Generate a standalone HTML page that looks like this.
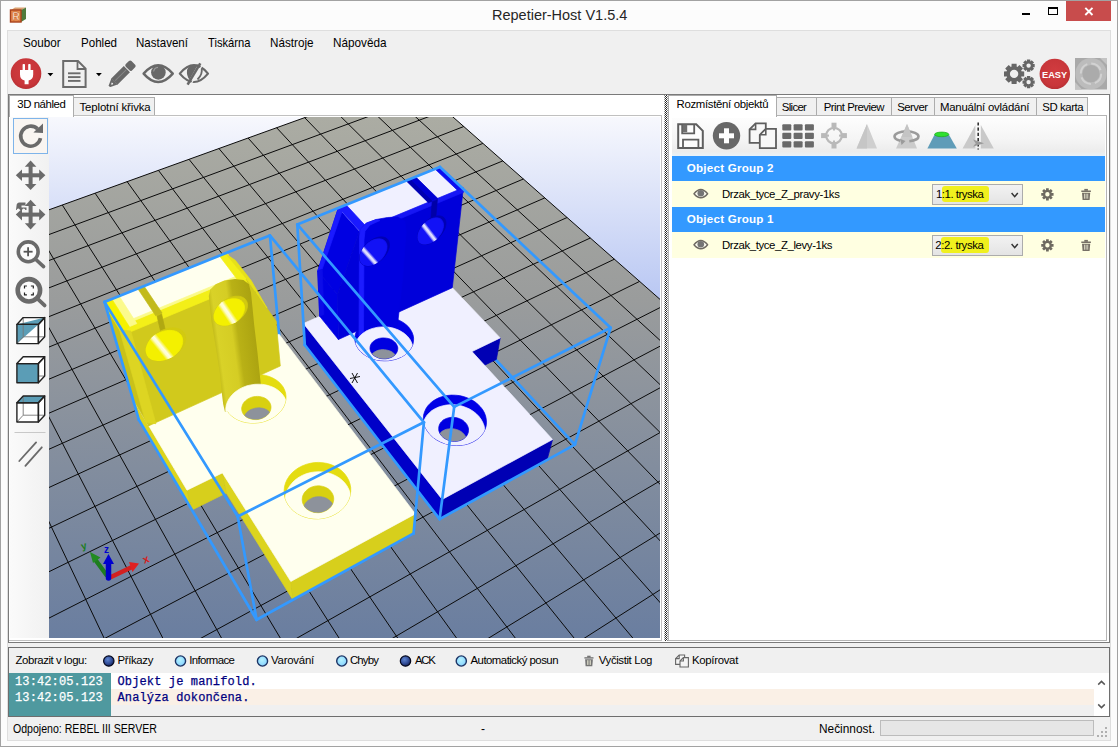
<!DOCTYPE html>
<html lang="cs">
<head>
<meta charset="utf-8">
<title>Repetier-Host V1.5.4</title>
<style>
html,body{margin:0;padding:0;}
body{width:1118px;height:747px;overflow:hidden;background:#fcfcfc;font-family:"Liberation Sans",sans-serif;font-size:12px;color:#000;position:relative;}
.abs{position:absolute;}
#frame{left:0;top:0;width:1116px;height:745px;border:1px solid #a2a2a2;background:#fcfcfc;}
#client{left:7px;top:30px;width:1102px;height:709px;border:1px solid #dedede;background:#f0f0f0;}
#title{left:491px;top:7px;font-size:14.8px;line-height:17px;color:#262626;}
.menu{top:36px;font-size:12.4px;line-height:14px;color:#000;white-space:nowrap;}
.tab{top:97px;height:17px;border:1px solid #acacac;border-bottom:none;background:#f0f0f0;box-sizing:content-box;}
.tab.sel{top:95px;height:21px;background:#fff;z-index:3;}
.t{white-space:nowrap;}
.tt{top:101px;font-size:11.4px;line-height:13px;white-space:nowrap;z-index:4;}
.ht{color:#fff;font-weight:bold;font-size:11.6px;line-height:13px;white-space:nowrap;}
.st{top:722px;font-size:12px;line-height:14px;}
.ms{font-size:11.4px;line-height:13px;white-space:nowrap;}
.hdr{left:672px;width:433px;height:25px;background:#3399ff;}
.row{left:672px;width:433px;height:26px;background:#ffffe1;}
.combo{left:932px;width:89px;height:19px;border:1px solid #acacac;background:linear-gradient(#f2f2f2,#e4e4e4);box-sizing:content-box;}
.hl{background:#f0f01e;border-radius:3px;}
.log{font-family:"Liberation Mono",monospace;font-size:12px;white-space:pre;line-height:16px;-webkit-text-stroke:0.25px currentColor;}
</style>
<style>
#title{left:491.7px !important;transform-origin:0 50%;transform:scaleX(0.9792);}
#m1{left:23.0px !important;transform-origin:0 50%;transform:scaleX(0.9432);}
#m2{left:80.5px !important;transform-origin:0 50%;transform:scaleX(0.9328);}
#m3{left:136.0px !important;transform-origin:0 50%;transform:scaleX(0.9320);}
#m4{left:207.5px !important;transform-origin:0 50%;transform:scaleX(0.9031);}
#m5{left:270.0px !important;transform-origin:0 50%;transform:scaleX(0.9428);}
#m6{left:332.5px !important;transform-origin:0 50%;transform:scaleX(0.9469);}
#t1{left:17.3px !important;letter-spacing:-0.438px;}
#t2{left:79.5px !important;letter-spacing:-0.121px;}
#t3{left:676.6px !important;letter-spacing:-0.328px;}
#t4{left:781.8px !important;letter-spacing:-0.681px;}
#t5{left:823.7px !important;letter-spacing:-0.524px;}
#t6{left:897.2px !important;letter-spacing:-0.552px;}
#t7{left:940.0px !important;letter-spacing:-0.226px;}
#t8{left:1042.2px !important;letter-spacing:-0.402px;}
#h1{left:686.8px !important;letter-spacing:0.232px;}
#h2{left:686.8px !important;letter-spacing:0.232px;}
#r1{left:721.9px !important;letter-spacing:-0.381px;}
#r2{left:721.9px !important;letter-spacing:-0.389px;}
#c1{left:936.0px !important;letter-spacing:-0.468px;}
#c2{left:935.2px !important;letter-spacing:-0.386px;}
#l0{left:15.5px !important;letter-spacing:-0.414px;}
#l1{left:117.5px !important;letter-spacing:-0.355px;}
#l2{left:189.2px !important;letter-spacing:-0.628px;}
#l3{left:271.0px !important;letter-spacing:-0.219px;}
#l4{left:350.0px !important;letter-spacing:-0.859px;}
#l5{left:415.0px !important;letter-spacing:-1.307px;}
#l6{left:470.5px !important;letter-spacing:-0.515px;}
#l7{left:598.8px !important;letter-spacing:-0.382px;}
#l8{left:692.0px !important;letter-spacing:-0.307px;}
#s1{left:13.0px !important;transform-origin:0 50%;transform:scaleX(0.8812);}
#s3{left:818.5px !important;transform-origin:0 50%;transform:scaleX(0.9876);}
#g1{left:15.0px !important;letter-spacing:0.123px;}
#g2{left:117.5px !important;letter-spacing:0.130px;}
</style>
</head>
<body>
<div id="frame" class="abs"></div>
<div id="client" class="abs"></div>
<div id="title" class="abs t">Repetier-Host V1.5.4</div>

<svg class="abs" style="left:8px;top:6px" width="20" height="20" viewBox="0 0 20 20">
 <polygon points="3,4 7,1.5 18,1.5 13,4" fill="#d9a070"/>
 <polygon points="13,4 18,1.5 18,13 13,16" fill="#4f7a3c"/>
 <rect x="2.5" y="4" width="10.5" height="12" fill="#e58a4e" stroke="#a8401a" stroke-width="1.4"/>
 <text x="4.2" y="14" font-family="Liberation Sans,sans-serif" font-weight="bold" font-size="10.5" fill="#ffe6cc" stroke="#b5501c" stroke-width="0.35">R</text>
</svg>
<div class="abs" style="left:1022px;top:13px;width:8px;height:2px;background:#000;"></div>
<div class="abs" style="left:1048px;top:7px;width:8px;height:5px;border:1px solid #000;border-top-width:2px;"></div>
<div class="abs" style="left:1066px;top:1px;width:45px;height:20px;background:#c84c4c;"></div>
<svg class="abs" style="left:1066px;top:1px" width="45" height="20"><g stroke="#fff" stroke-width="1.9"><line x1="19.3" y1="6.8" x2="26.5" y2="14"/><line x1="26.5" y1="6.8" x2="19.3" y2="14"/></g></svg>


<!-- menu -->
<div id="m1" class="abs menu" style="left:23px">Soubor</div>
<div id="m2" class="abs menu" style="left:80px">Pohled</div>
<div id="m3" class="abs menu" style="left:136px">Nastavení</div>
<div id="m4" class="abs menu" style="left:207px">Tiskárna</div>
<div id="m5" class="abs menu" style="left:270px">Nástroje</div>
<div id="m6" class="abs menu" style="left:333px">Nápověda</div>
<svg class="abs" style="left:8px;top:56px" width="1102" height="37" viewBox="8 56 1102 37">
<defs><radialGradient id="rg" cx="0.5" cy="0.45" r="0.55"><stop offset="0" stop-color="#d23c40"/><stop offset="0.8" stop-color="#c8363a"/><stop offset="1" stop-color="#b83034"/></radialGradient></defs>
<circle cx="26" cy="73.6" r="15.3" fill="url(#rg)"/>
<g fill="#fff"><rect x="22.6" y="64" width="2.4" height="7" rx="0.8"/><rect x="28.2" y="64" width="2.4" height="7" rx="0.8"/><path d="M20,70 H33.2 V74.5 Q33.2,79.5 28.6,80.6 V84.2 H24.6 V80.6 Q20,79.5 20,74.5Z"/></g>
<polygon points="47.5,73 53.3,73 50.4,76.2" fill="#000"/>
<g fill="none" stroke="#6b6b6b" stroke-width="2"><path d="M63.2,61 H78 L85.6,68.6 V87 H63.2Z" stroke-linejoin="miter"/><path d="M77.5,61 V69 H85.6" stroke-width="1.8"/></g>
<g stroke="#6b6b6b" stroke-width="1.9"><line x1="68" y1="73.3" x2="80.5" y2="73.3"/><line x1="68" y1="77.1" x2="80.5" y2="77.1"/><line x1="68" y1="80.9" x2="80.5" y2="80.9"/></g>
<polygon points="96,73 101.8,73 98.9,76.2" fill="#000"/>
<g transform="translate(109.2,86.6) rotate(-44.5)" fill="#686868"><polygon points="0,0 0.6,-1.2 7.4,-4.4 7.4,4.4 0.6,1.2"/><rect x="7.2" y="-4.4" width="17.6" height="8.8"/><rect x="25.8" y="-4.4" width="8" height="8.8" rx="1.8"/><polygon points="2.8,-0.2 4.6,-1.2 5.2,0.4 3.6,1" fill="#f0f0f0"/><rect x="8.5" y="-0.5" width="15.6" height="0.9" fill="#868686"/></g>
<g><path d="M143.6,73.6 Q158.2,56.8 172.8,73.6 Q158.2,90.4 143.6,73.6Z" fill="none" stroke="#686868" stroke-width="2.4" stroke-linejoin="round"/><circle cx="158.4" cy="72.4" r="7.3" fill="#686868"/><path d="M153.6,71.5 A5,5 0 0 1 158,67.4" fill="none" stroke="#9a9a9a" stroke-width="1.1"/></g>
<g><path d="M179.8,73.6 Q194,56.8 208,73.6 Q194,90.4 179.8,73.6Z" fill="none" stroke="#686868" stroke-width="2.2" stroke-linejoin="round"/><path d="M187,70 Q188,65 198,64.6 L189.5,79.6 Q186.4,76 187,70Z" fill="#686868"/><path d="M201.5,68 Q203,74 197.5,79.5" fill="none" stroke="#686868" stroke-width="1.8"/><line x1="187.6" y1="84.6" x2="200.3" y2="63.3" stroke="#686868" stroke-width="2.6"/><line x1="190.3" y1="85.2" x2="202.6" y2="64.6" stroke="#f0f0f0" stroke-width="1.2"/></g>
<path d="M1021.33,71.25 L1024.20,71.41 L1024.20,76.39 L1021.33,76.55 L1021.09,77.13 L1023.00,79.28 L1019.48,82.80 L1017.33,80.89 L1016.75,81.13 L1016.59,84.00 L1011.61,84.00 L1011.45,81.13 L1010.87,80.89 L1008.72,82.80 L1005.20,79.28 L1007.11,77.13 L1006.87,76.55 L1004.00,76.39 L1004.00,71.41 L1006.87,71.25 L1007.11,70.67 L1005.20,68.52 L1008.72,65.00 L1010.87,66.91 L1011.45,66.67 L1011.61,63.80 L1016.59,63.80 L1016.75,66.67 L1017.33,66.91 L1019.48,65.00 L1023.00,68.52 L1021.09,70.67Z M1009.90,73.90 a4.20,4.20 0 1,0 8.40,0 a4.20,4.20 0 1,0 -8.40,0Z" fill="#666" fill-rule="evenodd"/>
<path d="M1032.76,63.89 L1034.68,63.93 L1034.68,67.27 L1032.76,67.31 L1032.75,67.34 L1034.07,68.72 L1031.72,71.07 L1030.34,69.75 L1030.31,69.76 L1030.27,71.68 L1026.93,71.68 L1026.89,69.76 L1026.86,69.75 L1025.48,71.07 L1023.13,68.72 L1024.45,67.34 L1024.44,67.31 L1022.52,67.27 L1022.52,63.93 L1024.44,63.89 L1024.45,63.86 L1023.13,62.48 L1025.48,60.13 L1026.86,61.45 L1026.89,61.44 L1026.93,59.52 L1030.27,59.52 L1030.31,61.44 L1030.34,61.45 L1031.72,60.13 L1034.07,62.48 L1032.75,63.86Z M1026.40,65.60 a2.20,2.20 0 1,0 4.40,0 a2.20,2.20 0 1,0 -4.40,0Z" fill="#666" fill-rule="evenodd"/>
<path d="M1032.76,80.39 L1034.68,80.43 L1034.68,83.77 L1032.76,83.81 L1032.75,83.84 L1034.07,85.22 L1031.72,87.57 L1030.34,86.25 L1030.31,86.26 L1030.27,88.18 L1026.93,88.18 L1026.89,86.26 L1026.86,86.25 L1025.48,87.57 L1023.13,85.22 L1024.45,83.84 L1024.44,83.81 L1022.52,83.77 L1022.52,80.43 L1024.44,80.39 L1024.45,80.36 L1023.13,78.98 L1025.48,76.63 L1026.86,77.95 L1026.89,77.94 L1026.93,76.02 L1030.27,76.02 L1030.31,77.94 L1030.34,77.95 L1031.72,76.63 L1034.07,78.98 L1032.75,80.36Z M1026.40,82.10 a2.20,2.20 0 1,0 4.40,0 a2.20,2.20 0 1,0 -4.40,0Z" fill="#666" fill-rule="evenodd"/>
<circle cx="1054.8" cy="73.9" r="15.2" fill="url(#rg)"/>
<text x="1054.6" y="77.5" text-anchor="middle" font-family="Liberation Sans,sans-serif" font-weight="bold" font-size="9.3" fill="#fff" textLength="25.2" lengthAdjust="spacingAndGlyphs">EASY</text>
<rect x="1075" y="58" width="32" height="31.5" fill="#a9a9a9"/><circle cx="1091" cy="73.7" r="15.6" fill="#bcbcbc"/><circle cx="1091" cy="73.7" r="10.2" fill="none" stroke="#d2d2d2" stroke-width="2" stroke-dasharray="12 4"/><circle cx="1091" cy="73.7" r="8.6" fill="#ababab"/><polygon points="1075,89.5 1082,89.5 1075,82" fill="#c4c4c4"/><polygon points="1107,58 1100,58 1107,65" fill="#c4c4c4"/>
</svg>

<!-- split container top line -->
<div class="abs" style="left:8px;top:94px;width:1102px;height:549px;background:#fff;border:1px solid #7a7a7a;box-sizing:border-box;"></div>

<!-- left tab control -->
<div class="abs tab sel" style="left:9px;width:63px;"></div><div id="t1" class="abs tt" style="top:98px;">3D náhled</div>
<div class="abs tab" style="left:73px;width:80px;"></div><div id="t2" class="abs tt">Teplotní křivka</div>
<div class="abs" style="left:9px;top:115px;width:653px;height:526px;border:1px solid #c0c0c0;border-left:none;box-sizing:border-box;background:#fff;"></div>
<div class="abs" style="left:10px;top:116px;width:39px;height:522px;background:linear-gradient(90deg,#fafafa,#f1f1f1);"></div>
<div class="abs" style="left:13px;top:118px;width:33px;height:34px;border:1px solid #7eb4ea;background:#f9f5f1;"></div>
<svg class="abs" style="left:10px;top:116px" width="39" height="360" viewBox="10 116 39 360">
<path d="M37.6,128.9 A10,10 0 1 0 40.5,138.2" fill="none" stroke="#6a6a6a" stroke-width="3.6"/>
<polygon points="33.4,132.6 43,133 43,123.6" fill="#6a6a6a"/>
<g fill="#6a6a6a" stroke="none"><rect x="19.6" y="173.3" width="22" height="4"/><rect x="28.6" y="164.3" width="4" height="22"/><polygon points="45.4,175.3 39.2,181.1 39.2,169.5"/><polygon points="15.8,175.3 22.0,169.5 22.0,181.1"/><polygon points="30.6,190.1 24.8,183.9 36.4,183.9"/><polygon points="30.6,160.5 36.4,166.7 24.8,166.7"/></g>
<g fill="#6a6a6a" stroke="none"><rect x="19.6" y="212.6" width="22" height="4"/><rect x="28.6" y="203.6" width="4" height="22"/><polygon points="45.4,214.6 39.2,220.4 39.2,208.8"/><polygon points="15.8,214.6 22.0,208.8 22.0,220.4"/><polygon points="30.6,229.4 24.8,223.2 36.4,223.2"/><polygon points="30.6,199.8 36.4,206.0 24.8,206.0"/></g>
<path d="M16.5,206 q0,-3.5 3,-3.5 h6 v3 h-4 v2 h5 v2.5 h-1.2 a1.6,1.6 0 0 0 -3.2,0 h-2.2 a1.6,1.6 0 0 0 -3.2,0 h-0.7z" fill="#6a6a6a"/>
<circle cx="28.2" cy="251.8" r="9.9" fill="#fbfbfb" stroke="#6a6a6a" stroke-width="3.6"/>
<g stroke="#555" stroke-width="1.8"><line x1="23.6" y1="251.7" x2="32.6" y2="251.7"/><line x1="28.1" y1="247.2" x2="28.1" y2="256.2"/></g>
<line x1="35.6" y1="259.2" x2="43.6" y2="266.6" stroke="#6a6a6a" stroke-width="3.6" stroke-linecap="round"/>
<circle cx="28.9" cy="290.3" r="11.2" fill="#fbfbfb" stroke="#6a6a6a" stroke-width="4.6"/>
<g fill="none" stroke="#222" stroke-width="1.2"><polyline points="24.5,288.4 24.5,286 26.9,286"/><polyline points="30.9,286 33.3,286 33.3,288.4"/><polyline points="33.3,292.4 33.3,294.8 30.9,294.8"/><polyline points="26.9,294.8 24.5,294.8 24.5,292.4"/></g>
<line x1="38.2" y1="299.4" x2="44.6" y2="305.4" stroke="#6a6a6a" stroke-width="3.8" stroke-linecap="round"/>
<polygon points="16.9,324.4 23.2,317.6 44.7,317.6 38.4,324.4" fill="#fff"/><polygon points="16.9,324.4 44.7,317.6 38.4,324.4" fill="#5b9db6"/><polygon points="38.4,324.4 44.7,317.6 44.7,336.8 38.4,343.6" fill="#fff"/><polygon points="16.9,324.4 38.4,324.4 38.4,343.6 16.9,343.6" fill="#fff"/><polygon points="16.9,324.4 38.4,324.4 16.9,343.6" fill="#5b9db6"/><g fill="none" stroke="#777" stroke-width="0.9"><polyline points="23.2,317.6 23.2,336.8 44.7,336.8"/><line x1="23.2" y1="336.8" x2="16.9" y2="343.6"/></g><g fill="none" stroke="#222" stroke-width="1.4" stroke-linejoin="round"><polygon points="16.9,324.4 38.4,324.4 38.4,343.6 16.9,343.6"/><polygon points="16.9,324.4 23.2,317.6 44.7,317.6 38.4,324.4"/><polygon points="38.4,324.4 44.7,317.6 44.7,336.8 38.4,343.6"/></g>
<polygon points="16.9,363.6 23.2,356.8 44.7,356.8 38.4,363.6" fill="#fff"/><polygon points="38.4,363.6 44.7,356.8 44.7,376.0 38.4,382.8" fill="#fff"/><polygon points="16.9,363.6 38.4,363.6 38.4,382.8 16.9,382.8" fill="#5b9db6"/><line x1="38.4" y1="376.0" x2="44.7" y2="376.0" stroke="#777" stroke-width="0.9"/><g fill="none" stroke="#222" stroke-width="1.4" stroke-linejoin="round"><polygon points="16.9,363.6 38.4,363.6 38.4,382.8 16.9,382.8"/><polygon points="16.9,363.6 23.2,356.8 44.7,356.8 38.4,363.6"/><polygon points="38.4,363.6 44.7,356.8 44.7,376.0 38.4,382.8"/></g>
<polygon points="16.9,402.8 23.2,396.0 44.7,396.0 38.4,402.8" fill="#5b9db6"/><polygon points="38.4,402.8 44.7,396.0 44.7,415.2 38.4,422.0" fill="#fff"/><polygon points="16.9,402.8 38.4,402.8 38.4,422.0 16.9,422.0" fill="#fff"/><g fill="none" stroke="#777" stroke-width="0.9"><polyline points="23.2,396.0 23.2,415.2 44.7,415.2"/><line x1="23.2" y1="415.2" x2="16.9" y2="422.0"/></g><g fill="none" stroke="#222" stroke-width="1.4" stroke-linejoin="round"><polygon points="16.9,402.8 38.4,402.8 38.4,422.0 16.9,422.0"/><polygon points="16.9,402.8 23.2,396.0 44.7,396.0 38.4,402.8"/><polygon points="38.4,402.8 44.7,396.0 44.7,415.2 38.4,422.0"/></g>
<line x1="14.5" y1="432.5" x2="45.5" y2="432.5" stroke="#c8c8c8" stroke-width="1"/>
<g stroke="#6a6a6a" stroke-width="1.8" stroke-linecap="round"><line x1="19.3" y1="461" x2="36.1" y2="442.4"/><line x1="25.4" y1="465.8" x2="41.8" y2="447.3"/></g>
</svg>
<svg class="abs" style="left:49px;top:117px" width="611" height="521" viewBox="49 117 611 521">
<defs><linearGradient id="bg" x1="0" y1="0" x2="0" y2="1"><stop offset="0" stop-color="#f7f8fd"/><stop offset="1" stop-color="#456ce0"/></linearGradient><linearGradient id="fl" gradientUnits="userSpaceOnUse" x1="0" y1="117" x2="0" y2="638"><stop offset="0" stop-color="#abaca3"/><stop offset="0.35" stop-color="#9a9c9c"/><stop offset="1" stop-color="#6a7ea0"/></linearGradient></defs>
<rect x="49" y="117" width="611" height="521" fill="url(#bg)"/>
<polygon points="410.4,79.5 -231.7,311.0 30.2,1159.8 925.8,533.5" fill="url(#fl)" />
<line x1="410.4" y1="79.5" x2="925.8" y2="533.5" stroke="#0a0a0a" stroke-width="1" />
<line x1="410.4" y1="79.5" x2="-231.7" y2="311.0" stroke="#0a0a0a" stroke-width="1" />
<line x1="384.8" y1="88.7" x2="894.9" y2="555.1" stroke="#0a0a0a" stroke-width="1" />
<line x1="427.6" y1="94.6" x2="-224.2" y2="335.5" stroke="#0a0a0a" stroke-width="1" />
<line x1="358.6" y1="98.1" x2="863.0" y2="577.5" stroke="#0a0a0a" stroke-width="1" />
<line x1="445.4" y1="110.3" x2="-216.3" y2="361.0" stroke="#0a0a0a" stroke-width="1" />
<line x1="331.9" y1="107.8" x2="830.0" y2="600.5" stroke="#0a0a0a" stroke-width="1" />
<line x1="463.8" y1="126.5" x2="-208.0" y2="387.8" stroke="#0a0a0a" stroke-width="1" />
<line x1="304.6" y1="117.6" x2="795.9" y2="624.4" stroke="#0a0a0a" stroke-width="1" />
<line x1="482.9" y1="143.4" x2="-199.4" y2="415.8" stroke="#0a0a0a" stroke-width="1" />
<line x1="276.6" y1="127.7" x2="760.6" y2="649.1" stroke="#0a0a0a" stroke-width="1" />
<line x1="502.8" y1="160.9" x2="-190.3" y2="445.2" stroke="#0a0a0a" stroke-width="1" />
<line x1="248.1" y1="138.0" x2="724.0" y2="674.6" stroke="#0a0a0a" stroke-width="1" />
<line x1="523.4" y1="179.0" x2="-180.8" y2="476.1" stroke="#0a0a0a" stroke-width="1" />
<line x1="218.9" y1="148.5" x2="686.2" y2="701.1" stroke="#0a0a0a" stroke-width="1" />
<line x1="544.8" y1="197.9" x2="-170.8" y2="508.6" stroke="#0a0a0a" stroke-width="1" />
<line x1="189.0" y1="159.3" x2="646.9" y2="728.6" stroke="#0a0a0a" stroke-width="1" />
<line x1="567.1" y1="217.5" x2="-160.2" y2="542.8" stroke="#0a0a0a" stroke-width="1" />
<line x1="158.4" y1="170.3" x2="606.1" y2="757.1" stroke="#0a0a0a" stroke-width="1" />
<line x1="590.3" y1="238.0" x2="-149.1" y2="578.8" stroke="#0a0a0a" stroke-width="1" />
<line x1="127.1" y1="181.6" x2="563.8" y2="786.7" stroke="#0a0a0a" stroke-width="1" />
<line x1="614.4" y1="259.2" x2="-137.3" y2="616.9" stroke="#0a0a0a" stroke-width="1" />
<line x1="95.1" y1="193.2" x2="519.8" y2="817.5" stroke="#0a0a0a" stroke-width="1" />
<line x1="639.6" y1="281.4" x2="-124.9" y2="657.2" stroke="#0a0a0a" stroke-width="1" />
<line x1="62.3" y1="205.0" x2="474.1" y2="849.4" stroke="#0a0a0a" stroke-width="1" />
<line x1="665.9" y1="304.6" x2="-111.8" y2="699.8" stroke="#0a0a0a" stroke-width="1" />
<line x1="28.7" y1="217.1" x2="426.5" y2="882.7" stroke="#0a0a0a" stroke-width="1" />
<line x1="693.3" y1="328.7" x2="-97.8" y2="745.0" stroke="#0a0a0a" stroke-width="1" />
<line x1="-5.8" y1="229.5" x2="376.9" y2="917.4" stroke="#0a0a0a" stroke-width="1" />
<line x1="722.0" y1="354.0" x2="-83.0" y2="793.1" stroke="#0a0a0a" stroke-width="1" />
<line x1="-41.1" y1="242.3" x2="325.3" y2="953.5" stroke="#0a0a0a" stroke-width="1" />
<line x1="752.0" y1="380.5" x2="-67.2" y2="844.3" stroke="#0a0a0a" stroke-width="1" />
<line x1="-77.3" y1="255.3" x2="271.4" y2="991.2" stroke="#0a0a0a" stroke-width="1" />
<line x1="783.5" y1="408.2" x2="-50.3" y2="898.9" stroke="#0a0a0a" stroke-width="1" />
<line x1="-114.4" y1="268.7" x2="215.1" y2="1030.6" stroke="#0a0a0a" stroke-width="1" />
<line x1="816.4" y1="437.2" x2="-32.3" y2="957.4" stroke="#0a0a0a" stroke-width="1" />
<line x1="-152.5" y1="282.5" x2="156.2" y2="1071.7" stroke="#0a0a0a" stroke-width="1" />
<line x1="851.1" y1="467.7" x2="-12.9" y2="1020.0" stroke="#0a0a0a" stroke-width="1" />
<line x1="-191.6" y1="296.6" x2="94.7" y2="1114.7" stroke="#0a0a0a" stroke-width="1" />
<line x1="887.5" y1="499.8" x2="7.8" y2="1087.3" stroke="#0a0a0a" stroke-width="1" />
<line x1="-231.7" y1="311.0" x2="30.2" y2="1159.8" stroke="#0a0a0a" stroke-width="1" />
<line x1="925.8" y1="533.5" x2="30.2" y2="1159.8" stroke="#0a0a0a" stroke-width="1" />
<line x1="429.6" y1="288.7" x2="304.8" y2="345.0" stroke="#3399ff" stroke-width="2.7" stroke-linecap="round"/>
<line x1="429.6" y1="288.7" x2="439.9" y2="167.0" stroke="#3399ff" stroke-width="2.7" stroke-linecap="round"/>
<line x1="574.9" y1="444.6" x2="429.6" y2="288.7" stroke="#3399ff" stroke-width="2.7" stroke-linecap="round"/>
<polygon points="304.8,345.0 439.6,519.1 442.2,499.4 303.4,323.5" fill="#0000c8" stroke="#0000c8" stroke-width="0.7" stroke-linejoin="round" />
<polygon points="468.9,373.0 496.4,359.4 500.2,337.9 472.0,351.6" fill="#0000b4" stroke="#0000b4" stroke-width="0.7" stroke-linejoin="round" />
<polygon points="439.6,519.1 547.0,460.0 552.6,439.5 442.2,499.4" fill="#0000b4" stroke="#0000b4" stroke-width="0.7" stroke-linejoin="round" />
<polygon points="303.4,323.5 432.1,266.5 500.2,337.9 472.0,351.6 552.6,439.5 442.2,499.4" fill="#f0f0ff" stroke="#f0f0ff" stroke-width="0.7" stroke-linejoin="round" />
<polygon points="480.3,406.7 482.6,409.6 484.4,412.8 485.6,416.0 486.3,419.4 486.5,422.7 486.1,426.1 485.1,429.3 483.6,432.4 481.5,435.3 479.0,437.9 476.0,440.1 472.6,442.1 468.9,443.6 464.9,444.7 460.7,445.3 456.4,445.5 452.1,445.2 447.9,444.4 443.8,443.2 439.8,441.6 436.2,439.6 432.9,437.2 430.1,434.5 427.7,431.6 425.8,428.4 424.4,425.2 423.6,421.8 423.3,418.5 423.6,415.1 424.5,411.9 425.9,408.8 427.7,406.0 430.1,403.4 432.9,401.1 436.1,399.1 439.5,397.5 443.3,396.3 447.2,395.5 451.3,395.1 455.4,395.2 459.5,395.6 463.6,396.6 467.5,397.9 471.2,399.6 474.6,401.6 477.6,404.0 480.3,406.7" fill="#0000e6" stroke="#0000e6" stroke-width="0.7" stroke-linejoin="round" />
<clipPath id="c1a"><polygon points="480.3,406.7 482.6,409.6 484.4,412.8 485.6,416.0 486.3,419.4 486.5,422.7 486.1,426.1 485.1,429.3 483.6,432.4 481.5,435.3 479.0,437.9 476.0,440.1 472.6,442.1 468.9,443.6 464.9,444.7 460.7,445.3 456.4,445.5 452.1,445.2 447.9,444.4 443.8,443.2 439.8,441.6 436.2,439.6 432.9,437.2 430.1,434.5 427.7,431.6 425.8,428.4 424.4,425.2 423.6,421.8 423.3,418.5 423.6,415.1 424.5,411.9 425.9,408.8 427.7,406.0 430.1,403.4 432.9,401.1 436.1,399.1 439.5,397.5 443.3,396.3 447.2,395.5 451.3,395.1 455.4,395.2 459.5,395.6 463.6,396.6 467.5,397.9 471.2,399.6 474.6,401.6 477.6,404.0 480.3,406.7"/></clipPath>
<polygon points="478.8,416.3 481.0,419.2 482.7,422.3 484.0,425.5 484.7,428.8 484.8,432.2 484.4,435.5 483.4,438.7 481.9,441.8 479.9,444.6 477.4,447.2 474.4,449.5 471.1,451.4 467.4,452.9 463.5,454.0 459.4,454.6 455.1,454.8 450.9,454.5 446.7,453.8 442.6,452.6 438.8,450.9 435.2,448.9 431.9,446.6 429.1,443.9 426.8,441.0 424.9,437.9 423.5,434.6 422.7,431.3 422.5,427.9 422.8,424.6 423.6,421.4 425.0,418.4 426.8,415.5 429.2,412.9 431.9,410.6 435.0,408.7 438.5,407.1 442.2,405.9 446.1,405.1 450.1,404.7 454.2,404.7 458.2,405.2 462.2,406.1 466.1,407.5 469.7,409.1 473.1,411.2 476.1,413.6 478.8,416.3" fill="#f0f0ff" stroke="#f0f0ff" stroke-width="0.7" stroke-linejoin="round" clip-path="url(#c1a)"/>
<clipPath id="c1b"><polygon points="465.7,423.0 466.8,424.4 467.6,425.9 468.2,427.4 468.5,429.0 468.5,430.6 468.3,432.2 467.8,433.8 467.1,435.2 466.1,436.6 464.9,437.8 463.5,438.9 461.9,439.8 460.1,440.5 458.3,441.0 456.3,441.3 454.3,441.3 452.3,441.2 450.3,440.9 448.4,440.3 446.6,439.5 444.8,438.6 443.3,437.5 441.9,436.2 440.8,434.8 439.9,433.4 439.2,431.8 438.8,430.2 438.7,428.6 438.8,427.0 439.2,425.5 439.8,424.0 440.7,422.6 441.8,421.4 443.1,420.2 444.6,419.3 446.3,418.5 448.1,417.9 450.0,417.5 451.9,417.3 453.9,417.4 455.8,417.6 457.8,418.1 459.6,418.7 461.4,419.5 463.0,420.5 464.4,421.7 465.7,423.0"/></clipPath>
<polygon points="465.7,423.0 466.8,424.4 467.6,425.9 468.2,427.4 468.5,429.0 468.5,430.6 468.3,432.2 467.8,433.8 467.1,435.2 466.1,436.6 464.9,437.8 463.5,438.9 461.9,439.8 460.1,440.5 458.3,441.0 456.3,441.3 454.3,441.3 452.3,441.2 450.3,440.9 448.4,440.3 446.6,439.5 444.8,438.6 443.3,437.5 441.9,436.2 440.8,434.8 439.9,433.4 439.2,431.8 438.8,430.2 438.7,428.6 438.8,427.0 439.2,425.5 439.8,424.0 440.7,422.6 441.8,421.4 443.1,420.2 444.6,419.3 446.3,418.5 448.1,417.9 450.0,417.5 451.9,417.3 453.9,417.4 455.8,417.6 457.8,418.1 459.6,418.7 461.4,419.5 463.0,420.5 464.4,421.7 465.7,423.0" fill="#0000e0" stroke="#0000e0" stroke-width="0.7" stroke-linejoin="round" />
<polygon points="464.0,434.3 465.1,435.7 465.9,437.2 466.4,438.7 466.7,440.3 466.8,441.9 466.6,443.5 466.1,445.0 465.4,446.4 464.4,447.8 463.2,449.0 461.8,450.0 460.2,450.9 458.5,451.6 456.7,452.1 454.8,452.4 452.8,452.5 450.8,452.4 448.9,452.0 447.0,451.5 445.1,450.7 443.5,449.8 442.0,448.7 440.6,447.4 439.5,446.0 438.6,444.6 437.9,443.0 437.5,441.5 437.4,439.9 437.5,438.3 437.9,436.7 438.5,435.3 439.4,433.9 440.5,432.7 441.8,431.6 443.3,430.6 444.9,429.8 446.7,429.2 448.5,428.9 450.4,428.7 452.4,428.7 454.3,428.9 456.2,429.4 458.0,430.0 459.8,430.8 461.4,431.8 462.8,433.0 464.0,434.3" fill="#8d929b" stroke="#8d929b" stroke-width="0.7" stroke-linejoin="round" clip-path="url(#c1b)"/>
<polygon points="408.7,327.1 410.6,329.7 412.1,332.4 413.1,335.2 413.6,338.1 413.5,341.1 413.0,344.0 411.9,346.8 410.3,349.4 408.2,351.9 405.7,354.2 402.8,356.2 399.5,357.8 396.0,359.2 392.2,360.1 388.3,360.7 384.3,360.8 380.3,360.6 376.4,359.9 372.6,358.8 369.1,357.4 365.8,355.7 362.9,353.6 360.3,351.3 358.3,348.7 356.6,346.0 355.5,343.2 354.9,340.3 354.9,337.3 355.3,334.5 356.3,331.6 357.8,329.0 359.7,326.5 362.0,324.2 364.7,322.2 367.8,320.5 371.1,319.1 374.7,318.0 378.4,317.3 382.2,317.0 386.1,317.1 389.9,317.5 393.6,318.3 397.2,319.4 400.5,320.9 403.6,322.7 406.3,324.8 408.7,327.1" fill="#0000e6" stroke="#0000e6" stroke-width="0.7" stroke-linejoin="round" />
<polygon points="319.7,316.3 338.4,339.5 337.5,294.4 317.7,271.0" fill="#0000e2" stroke="#0000e2" stroke-width="0.7" stroke-linejoin="round" />
<polygon points="317.7,271.0 337.5,294.4 359.6,231.1 338.4,207.8" fill="#0000e2" stroke="#0000e2" stroke-width="0.7" stroke-linejoin="round" />
<polygon points="338.4,339.5 452.3,287.7 463.3,188.1 359.6,231.1 337.5,294.4" fill="#0000da" stroke="#0000da" stroke-width="0.7" stroke-linejoin="round" />
<polygon points="338.4,207.8 440.6,166.7 463.3,188.1 359.6,231.1" fill="#f0f0ff" stroke="#f0f0ff" stroke-width="0.7" stroke-linejoin="round" />
<polygon points="359.4,230.8 463.1,187.8 463.7,192.2 360.4,235.3" fill="#1616f4" stroke="#1616f4" stroke-width="0.7" stroke-linejoin="round" />
<polygon points="338.4,207.8 346.1,204.8 367.4,227.8 359.6,231.1" fill="#1a1aff" stroke="#1a1aff" stroke-width="0.7" stroke-linejoin="round" />
<polygon points="435.0,169.0 440.6,166.7 463.3,188.1 457.6,190.4" fill="#0c0cf0" stroke="#0c0cf0" stroke-width="0.7" stroke-linejoin="round" />
<polygon points="338.4,207.8 344.1,205.5 322.2,269.1 317.7,271.0" fill="#1a1aff" stroke="#1a1aff" stroke-width="0.7" stroke-linejoin="round" />
<polygon points="317.7,271.0 322.2,269.1 323.9,314.4 319.7,316.3" fill="#0c0ce8" stroke="#0c0ce8" stroke-width="0.7" stroke-linejoin="round" />
<polygon points="406.2,180.6 415.6,176.8 437.9,198.6 428.4,202.6" fill="#0000d2" stroke="#0000d2" stroke-width="0.7" stroke-linejoin="round" />
<polygon points="406.2,180.6 409.8,179.1 432.1,201.0 428.4,202.6" fill="#0000b0" stroke="#0000b0" stroke-width="0.7" stroke-linejoin="round" />
<polygon points="432.2,201.7 437.4,199.5 435.6,219.9 430.6,222.0" fill="#0000a8" stroke="#0000a8" stroke-width="0.7" stroke-linejoin="round" />
<polygon points="359.5,237.5 360.5,229.5 366.2,223.2 376.2,219.5 387.5,217.5 397.5,217.0 405.0,221.2 406.2,232.5 402.5,280.0 397.5,325.0 390.0,336.2 359.5,336.2" fill="#0000e0" stroke="#0000e0" stroke-width="0.7" stroke-linejoin="round" />
<polygon points="359.5,237.5 360.5,229.5 366.2,223.2 376.2,219.5 380.0,220.5 370.0,225.0 365.0,231.2 364.0,240.0 363.5,336.2 359.0,336.2" fill="#1c1cff" stroke="#1c1cff" stroke-width="0.7" stroke-linejoin="round" />
<clipPath id="d1"><polygon points="446.0,224.3 446.0,222.3 445.6,220.4 444.9,218.9 443.9,217.6 442.5,216.6 440.9,216.0 439.0,215.8 436.9,216.0 434.6,216.5 432.3,217.4 430.0,218.6 427.7,220.2 425.5,222.0 423.5,224.0 421.7,226.2 420.2,228.5 419.0,230.8 418.1,233.1 417.6,235.4 417.5,237.5 417.7,239.4 418.3,241.0 419.2,242.4 420.5,243.4 422.0,244.2 423.8,244.5 425.8,244.5 428.0,244.1 430.2,243.4 432.5,242.3 434.7,241.0 436.9,239.3 438.9,237.5 440.8,235.4 442.4,233.2 443.8,231.0 444.9,228.7 445.6,226.4 446.0,224.3"/></clipPath>
<polygon points="446.0,224.3 446.0,222.3 445.6,220.4 444.9,218.9 443.9,217.6 442.5,216.6 440.9,216.0 439.0,215.8 436.9,216.0 434.6,216.5 432.3,217.4 430.0,218.6 427.7,220.2 425.5,222.0 423.5,224.0 421.7,226.2 420.2,228.5 419.0,230.8 418.1,233.1 417.6,235.4 417.5,237.5 417.7,239.4 418.3,241.0 419.2,242.4 420.5,243.4 422.0,244.2 423.8,244.5 425.8,244.5 428.0,244.1 430.2,243.4 432.5,242.3 434.7,241.0 436.9,239.3 438.9,237.5 440.8,235.4 442.4,233.2 443.8,231.0 444.9,228.7 445.6,226.4 446.0,224.3" fill="#0000b4" stroke="#0000b4" stroke-width="0.7" stroke-linejoin="round" />
<polygon points="443.5,226.3 443.5,224.3 443.1,222.4 442.4,220.9 441.4,219.6 440.0,218.6 438.4,218.0 436.5,217.8 434.4,218.0 432.1,218.5 429.8,219.4 427.5,220.6 425.2,222.2 423.0,224.0 421.0,226.0 419.2,228.2 417.7,230.5 416.5,232.8 415.6,235.1 415.1,237.4 415.0,239.5 415.2,241.4 415.8,243.0 416.7,244.4 418.0,245.4 419.5,246.2 421.3,246.5 423.3,246.5 425.5,246.1 427.7,245.4 430.0,244.3 432.2,243.0 434.4,241.3 436.4,239.5 438.3,237.4 439.9,235.2 441.3,233.0 442.4,230.7 443.1,228.4 443.5,226.3" fill="#1212f6" stroke="#1212f6" stroke-width="0.7" stroke-linejoin="round" clip-path="url(#d1)"/>
<linearGradient id="sk1" gradientUnits="userSpaceOnUse" x1="426.0" y1="233.6" x2="431.0" y2="229.7"><stop offset="0" stop-color="#e6e6ff" stop-opacity="0"/><stop offset="0.35" stop-color="#e6e6ff" stop-opacity="0.9"/><stop offset="0.6" stop-color="#e6e6ff" stop-opacity="1"/><stop offset="1" stop-color="#e6e6ff" stop-opacity="0"/></linearGradient>
<polygon points="416.3,220.9 421.4,217.0 440.7,242.3 435.6,246.2" fill="url(#sk1)" clip-path="url(#d1)"/>
<clipPath id="d2"><polygon points="389.5,245.2 389.4,243.2 388.9,241.4 388.0,239.8 386.8,238.5 385.3,237.6 383.4,237.0 381.4,236.8 379.1,237.0 376.7,237.6 374.3,238.5 371.8,239.8 369.5,241.4 367.2,243.3 365.2,245.4 363.4,247.6 361.9,249.9 360.8,252.3 360.0,254.6 359.6,256.9 359.6,259.0 360.0,260.9 360.7,262.5 361.8,263.9 363.3,264.9 365.0,265.6 367.0,265.9 369.1,265.9 371.4,265.4 373.8,264.7 376.1,263.6 378.5,262.1 380.7,260.5 382.8,258.6 384.7,256.5 386.3,254.2 387.6,251.9 388.6,249.6 389.3,247.4 389.5,245.2"/></clipPath>
<polygon points="389.5,245.2 389.4,243.2 388.9,241.4 388.0,239.8 386.8,238.5 385.3,237.6 383.4,237.0 381.4,236.8 379.1,237.0 376.7,237.6 374.3,238.5 371.8,239.8 369.5,241.4 367.2,243.3 365.2,245.4 363.4,247.6 361.9,249.9 360.8,252.3 360.0,254.6 359.6,256.9 359.6,259.0 360.0,260.9 360.7,262.5 361.8,263.9 363.3,264.9 365.0,265.6 367.0,265.9 369.1,265.9 371.4,265.4 373.8,264.7 376.1,263.6 378.5,262.1 380.7,260.5 382.8,258.6 384.7,256.5 386.3,254.2 387.6,251.9 388.6,249.6 389.3,247.4 389.5,245.2" fill="#0000b4" stroke="#0000b4" stroke-width="0.7" stroke-linejoin="round" />
<polygon points="387.0,247.2 386.9,245.2 386.4,243.4 385.5,241.8 384.3,240.5 382.8,239.6 380.9,239.0 378.9,238.8 376.6,239.0 374.2,239.6 371.8,240.5 369.3,241.8 367.0,243.4 364.7,245.3 362.7,247.4 360.9,249.6 359.4,251.9 358.3,254.3 357.5,256.6 357.1,258.9 357.1,261.0 357.5,262.9 358.2,264.5 359.3,265.9 360.8,266.9 362.5,267.6 364.5,267.9 366.6,267.9 368.9,267.4 371.3,266.7 373.6,265.6 376.0,264.1 378.2,262.5 380.3,260.6 382.2,258.5 383.8,256.2 385.1,253.9 386.1,251.6 386.8,249.4 387.0,247.2" fill="#1212f6" stroke="#1212f6" stroke-width="0.7" stroke-linejoin="round" clip-path="url(#d2)"/>
<linearGradient id="sk2" gradientUnits="userSpaceOnUse" x1="366.1" y1="257.4" x2="370.9" y2="253.1"><stop offset="0" stop-color="#e6e6ff" stop-opacity="0"/><stop offset="0.35" stop-color="#e6e6ff" stop-opacity="0.9"/><stop offset="0.6" stop-color="#e6e6ff" stop-opacity="1"/><stop offset="1" stop-color="#e6e6ff" stop-opacity="0"/></linearGradient>
<polygon points="356.1,246.1 360.9,241.9 380.9,264.4 376.1,268.6" fill="url(#sk2)" clip-path="url(#d2)"/>
<clipPath id="c3a"><polygon points="408.7,327.1 410.6,329.7 412.1,332.4 413.1,335.2 413.6,338.1 413.5,341.1 413.0,344.0 411.9,346.8 410.3,349.4 408.2,351.9 405.7,354.2 402.8,356.2 399.5,357.8 396.0,359.2 392.2,360.1 388.3,360.7 384.3,360.8 380.3,360.6 376.4,359.9 372.6,358.8 369.1,357.4 365.8,355.7 362.9,353.6 360.3,351.3 358.3,348.7 356.6,346.0 355.5,343.2 354.9,340.3 354.9,337.3 355.3,334.5 356.3,331.6 357.8,329.0 359.7,326.5 362.0,324.2 364.7,322.2 367.8,320.5 371.1,319.1 374.7,318.0 378.4,317.3 382.2,317.0 386.1,317.1 389.9,317.5 393.6,318.3 397.2,319.4 400.5,320.9 403.6,322.7 406.3,324.8 408.7,327.1"/></clipPath>
<polygon points="408.1,337.0 410.0,339.5 411.4,342.2 412.4,345.0 412.9,347.9 412.8,350.9 412.3,353.7 411.2,356.5 409.6,359.2 407.6,361.7 405.1,363.9 402.2,365.9 399.0,367.6 395.5,368.9 391.8,369.8 387.9,370.4 383.9,370.5 380.0,370.3 376.1,369.6 372.4,368.6 368.9,367.2 365.7,365.4 362.8,363.4 360.3,361.1 358.2,358.5 356.6,355.8 355.5,353.0 355.0,350.1 354.9,347.2 355.3,344.3 356.3,341.5 357.7,338.8 359.6,336.3 361.9,334.1 364.6,332.1 367.7,330.3 371.0,328.9 374.5,327.9 378.1,327.2 381.9,326.9 385.7,326.9 389.5,327.3 393.2,328.1 396.7,329.3 400.0,330.8 403.0,332.6 405.7,334.6 408.1,337.0" fill="#f0f0ff" stroke="#f0f0ff" stroke-width="0.7" stroke-linejoin="round" clip-path="url(#c3a)"/>
<clipPath id="c3b"><polygon points="395.5,342.8 396.4,344.1 397.1,345.4 397.6,346.7 397.8,348.1 397.7,349.5 397.4,350.9 396.9,352.2 396.1,353.5 395.2,354.7 394.0,355.7 392.6,356.7 391.1,357.4 389.4,358.1 387.6,358.5 385.8,358.8 383.9,358.8 382.0,358.7 380.2,358.4 378.4,357.9 376.8,357.2 375.2,356.4 373.8,355.5 372.6,354.4 371.7,353.2 370.9,351.9 370.3,350.5 370.0,349.1 370.0,347.7 370.2,346.4 370.6,345.0 371.3,343.7 372.2,342.5 373.3,341.4 374.6,340.5 376.0,339.6 377.6,338.9 379.3,338.4 381.1,338.1 382.9,337.9 384.8,338.0 386.6,338.2 388.4,338.5 390.1,339.1 391.7,339.8 393.1,340.7 394.4,341.7 395.5,342.8"/></clipPath>
<polygon points="395.5,342.8 396.4,344.1 397.1,345.4 397.6,346.7 397.8,348.1 397.7,349.5 397.4,350.9 396.9,352.2 396.1,353.5 395.2,354.7 394.0,355.7 392.6,356.7 391.1,357.4 389.4,358.1 387.6,358.5 385.8,358.8 383.9,358.8 382.0,358.7 380.2,358.4 378.4,357.9 376.8,357.2 375.2,356.4 373.8,355.5 372.6,354.4 371.7,353.2 370.9,351.9 370.3,350.5 370.0,349.1 370.0,347.7 370.2,346.4 370.6,345.0 371.3,343.7 372.2,342.5 373.3,341.4 374.6,340.5 376.0,339.6 377.6,338.9 379.3,338.4 381.1,338.1 382.9,337.9 384.8,338.0 386.6,338.2 388.4,338.5 390.1,339.1 391.7,339.8 393.1,340.7 394.4,341.7 395.5,342.8" fill="#0000e0" stroke="#0000e0" stroke-width="0.7" stroke-linejoin="round" />
<polygon points="395.0,354.5 395.9,355.7 396.5,357.0 397.0,358.4 397.2,359.8 397.1,361.2 396.8,362.5 396.3,363.9 395.6,365.1 394.6,366.3 393.4,367.4 392.1,368.3 390.5,369.1 388.9,369.7 387.2,370.1 385.3,370.4 383.5,370.5 381.7,370.3 379.8,370.0 378.1,369.5 376.5,368.9 374.9,368.1 373.6,367.1 372.4,366.0 371.4,364.8 370.7,363.5 370.1,362.2 369.8,360.8 369.8,359.4 370.0,358.0 370.4,356.7 371.1,355.4 372.0,354.2 373.1,353.1 374.3,352.2 375.8,351.3 377.3,350.6 379.0,350.1 380.7,349.8 382.5,349.6 384.4,349.7 386.2,349.9 387.9,350.3 389.6,350.8 391.2,351.5 392.6,352.4 393.9,353.4 395.0,354.5" fill="#8d929b" stroke="#8d929b" stroke-width="0.7" stroke-linejoin="round" clip-path="url(#c3b)"/>
<line x1="439.9" y1="167.0" x2="297.3" y2="224.4" stroke="#3399ff" stroke-width="2.7" stroke-linecap="round"/>
<line x1="304.8" y1="345.0" x2="439.6" y2="519.1" stroke="#3399ff" stroke-width="2.7" stroke-linecap="round"/>
<line x1="297.3" y1="224.4" x2="454.2" y2="406.9" stroke="#3399ff" stroke-width="2.7" stroke-linecap="round"/>
<line x1="304.8" y1="345.0" x2="297.3" y2="224.4" stroke="#3399ff" stroke-width="2.7" stroke-linecap="round"/>
<line x1="439.6" y1="519.1" x2="574.9" y2="444.6" stroke="#3399ff" stroke-width="2.7" stroke-linecap="round"/>
<line x1="454.2" y1="406.9" x2="610.6" y2="327.8" stroke="#3399ff" stroke-width="2.7" stroke-linecap="round"/>
<line x1="439.6" y1="519.1" x2="454.2" y2="406.9" stroke="#3399ff" stroke-width="2.7" stroke-linecap="round"/>
<line x1="610.6" y1="327.8" x2="439.9" y2="167.0" stroke="#3399ff" stroke-width="2.7" stroke-linecap="round"/>
<line x1="574.9" y1="444.6" x2="610.6" y2="327.8" stroke="#3399ff" stroke-width="2.7" stroke-linecap="round"/>
<line x1="281.1" y1="355.7" x2="138.9" y2="419.9" stroke="#3399ff" stroke-width="2.7" stroke-linecap="round"/>
<line x1="281.1" y1="355.7" x2="269.9" y2="235.4" stroke="#3399ff" stroke-width="2.7" stroke-linecap="round"/>
<line x1="413.6" y1="533.4" x2="281.1" y2="355.7" stroke="#3399ff" stroke-width="2.7" stroke-linecap="round"/>
<polygon points="138.9,419.9 192.0,510.0 187.0,490.2 132.8,398.9" fill="#dcd41e" stroke="#dcd41e" stroke-width="0.7" stroke-linejoin="round" />
<polygon points="226.3,493.0 292.8,599.8 290.8,581.5 222.4,472.9" fill="#dcd41e" stroke="#dcd41e" stroke-width="0.7" stroke-linejoin="round" />
<polygon points="226.3,493.0 192.0,510.0 187.0,490.2 222.4,472.9" fill="#d7cf1c" stroke="#d7cf1c" stroke-width="0.7" stroke-linejoin="round" />
<polygon points="413.6,533.4 292.8,599.8 290.8,581.5 415.4,513.9" fill="#d7cf1c" stroke="#d7cf1c" stroke-width="0.7" stroke-linejoin="round" />
<polygon points="279.1,334.2 132.8,398.9 187.0,490.2 222.4,472.9 290.8,581.5 415.4,513.9" fill="#ffffee" stroke="#ffffee" stroke-width="0.7" stroke-linejoin="round" />
<polygon points="288.3,505.0 290.7,508.1 293.7,511.0 297.1,513.4 300.9,515.5 304.9,517.1 309.3,518.2 313.7,518.8 318.3,518.9 322.8,518.4 327.3,517.4 331.5,516.0 335.5,514.0 339.1,511.7 342.4,508.9 345.1,505.9 347.4,502.5 349.1,499.0 350.2,495.3 350.7,491.5 350.7,487.7 350.0,484.0 348.8,480.5 347.0,477.1 344.8,473.9 342.0,471.1 338.8,468.6 335.3,466.5 331.5,464.8 327.4,463.5 323.2,462.8 318.8,462.4 314.5,462.6 310.2,463.3 306.0,464.4 302.0,466.0 298.2,468.0 294.8,470.4 291.8,473.1 289.2,476.2 287.1,479.5 285.5,483.1 284.5,486.7 284.1,490.5 284.3,494.3 285.0,498.0 286.4,501.6 288.3,505.0" fill="#e4dc10" stroke="#e4dc10" stroke-width="0.7" stroke-linejoin="round" />
<clipPath id="c4a"><polygon points="288.3,505.0 290.7,508.1 293.7,511.0 297.1,513.4 300.9,515.5 304.9,517.1 309.3,518.2 313.7,518.8 318.3,518.9 322.8,518.4 327.3,517.4 331.5,516.0 335.5,514.0 339.1,511.7 342.4,508.9 345.1,505.9 347.4,502.5 349.1,499.0 350.2,495.3 350.7,491.5 350.7,487.7 350.0,484.0 348.8,480.5 347.0,477.1 344.8,473.9 342.0,471.1 338.8,468.6 335.3,466.5 331.5,464.8 327.4,463.5 323.2,462.8 318.8,462.4 314.5,462.6 310.2,463.3 306.0,464.4 302.0,466.0 298.2,468.0 294.8,470.4 291.8,473.1 289.2,476.2 287.1,479.5 285.5,483.1 284.5,486.7 284.1,490.5 284.3,494.3 285.0,498.0 286.4,501.6 288.3,505.0"/></clipPath>
<polygon points="289.2,513.9 291.6,517.1 294.5,519.9 297.9,522.4 301.6,524.4 305.6,526.0 309.9,527.1 314.3,527.7 318.8,527.7 323.3,527.3 327.7,526.3 331.8,524.9 335.8,522.9 339.4,520.6 342.5,517.9 345.3,514.8 347.5,511.5 349.2,508.0 350.3,504.3 350.8,500.6 350.8,496.8 350.1,493.1 348.9,489.6 347.2,486.2 344.9,483.1 342.2,480.3 339.1,477.8 335.6,475.7 331.8,474.0 327.8,472.8 323.6,472.0 319.3,471.7 315.0,471.9 310.8,472.5 306.6,473.6 302.7,475.2 299.0,477.2 295.6,479.6 292.7,482.3 290.1,485.4 288.0,488.7 286.5,492.2 285.5,495.8 285.1,499.5 285.2,503.3 286.0,507.0 287.3,510.6 289.2,513.9" fill="#ffffee" stroke="#ffffee" stroke-width="0.7" stroke-linejoin="round" clip-path="url(#c4a)"/>
<clipPath id="c4b"><polygon points="304.3,506.2 305.4,507.7 306.8,509.0 308.4,510.1 310.2,511.1 312.1,511.8 314.1,512.4 316.2,512.6 318.4,512.7 320.5,512.5 322.6,512.0 324.5,511.3 326.4,510.4 328.1,509.3 329.6,508.0 331.0,506.6 332.0,505.0 332.9,503.3 333.4,501.6 333.7,499.8 333.7,498.0 333.4,496.2 332.8,494.5 332.0,492.9 330.9,491.4 329.7,490.0 328.2,488.8 326.5,487.8 324.7,487.0 322.7,486.4 320.7,486.0 318.6,485.8 316.5,485.9 314.5,486.2 312.5,486.8 310.6,487.5 308.8,488.5 307.2,489.7 305.8,491.0 304.5,492.5 303.6,494.1 302.8,495.8 302.4,497.5 302.2,499.3 302.3,501.1 302.7,502.9 303.4,504.6 304.3,506.2"/></clipPath>
<polygon points="304.3,506.2 305.4,507.7 306.8,509.0 308.4,510.1 310.2,511.1 312.1,511.8 314.1,512.4 316.2,512.6 318.4,512.7 320.5,512.5 322.6,512.0 324.5,511.3 326.4,510.4 328.1,509.3 329.6,508.0 331.0,506.6 332.0,505.0 332.9,503.3 333.4,501.6 333.7,499.8 333.7,498.0 333.4,496.2 332.8,494.5 332.0,492.9 330.9,491.4 329.7,490.0 328.2,488.8 326.5,487.8 324.7,487.0 322.7,486.4 320.7,486.0 318.6,485.8 316.5,485.9 314.5,486.2 312.5,486.8 310.6,487.5 308.8,488.5 307.2,489.7 305.8,491.0 304.5,492.5 303.6,494.1 302.8,495.8 302.4,497.5 302.2,499.3 302.3,501.1 302.7,502.9 303.4,504.6 304.3,506.2" fill="#d8d010" stroke="#d8d010" stroke-width="0.7" stroke-linejoin="round" />
<polygon points="305.1,516.9 306.3,518.3 307.6,519.7 309.2,520.8 311.0,521.8 312.8,522.5 314.8,523.0 316.9,523.3 319.0,523.3 321.1,523.1 323.1,522.7 325.1,522.0 326.9,521.1 328.6,520.0 330.1,518.7 331.4,517.3 332.4,515.7 333.2,514.1 333.8,512.3 334.0,510.6 334.0,508.8 333.8,507.0 333.2,505.3 332.4,503.7 331.3,502.2 330.1,500.9 328.6,499.7 326.9,498.6 325.1,497.8 323.2,497.2 321.2,496.8 319.2,496.7 317.2,496.8 315.1,497.1 313.2,497.6 311.3,498.4 309.6,499.4 308.0,500.5 306.6,501.8 305.4,503.3 304.4,504.9 303.7,506.6 303.3,508.3 303.1,510.1 303.2,511.9 303.6,513.6 304.2,515.3 305.1,516.9" fill="#8d929b" stroke="#8d929b" stroke-width="0.7" stroke-linejoin="round" clip-path="url(#c4b)"/>
<polygon points="227.4,411.1 229.5,413.9 232.1,416.3 235.2,418.4 238.6,420.2 242.3,421.6 246.2,422.5 250.4,423.0 254.6,423.1 258.8,422.7 262.9,421.9 266.9,420.6 270.7,418.9 274.2,416.9 277.3,414.5 280.0,411.9 282.3,409.0 284.0,406.0 285.2,402.8 285.9,399.5 286.0,396.3 285.6,393.1 284.6,390.0 283.2,387.1 281.2,384.4 278.8,381.9 275.9,379.8 272.8,378.0 269.3,376.5 265.5,375.4 261.6,374.7 257.6,374.5 253.6,374.6 249.5,375.2 245.6,376.2 241.8,377.5 238.2,379.3 235.0,381.3 232.0,383.7 229.5,386.4 227.4,389.2 225.8,392.3 224.7,395.4 224.1,398.7 224.1,401.9 224.7,405.1 225.7,408.2 227.4,411.1" fill="#e4dc10" stroke="#e4dc10" stroke-width="0.7" stroke-linejoin="round" />
<polygon points="132.8,398.9 148.8,425.8 121.8,329.8 104.5,301.9" fill="#c9c11a" stroke="#c9c11a" stroke-width="0.7" stroke-linejoin="round" />
<polygon points="280.3,366.0 148.8,425.8 121.8,329.8 246.0,278.2 276.1,321.3" fill="#d1c91c" stroke="#d1c91c" stroke-width="0.7" stroke-linejoin="round" />
<polygon points="226.5,252.8 104.5,301.9 121.8,329.8 246.0,278.2" fill="#ffffee" stroke="#ffffee" stroke-width="0.7" stroke-linejoin="round" />
<polygon points="243.8,275.3 119.8,326.6 123.5,334.8 247.2,283.2" fill="#f3ef18" stroke="#f3ef18" stroke-width="0.7" stroke-linejoin="round" />
<polygon points="242.5,273.6 118.7,324.7 119.8,326.6 243.8,275.3" fill="#fbfa8c" stroke="#fbfa8c" stroke-width="0.7" stroke-linejoin="round" />
<polygon points="119.2,296.0 111.8,298.9 129.3,326.7 136.8,323.6" fill="#fbfa8c" stroke="#fbfa8c" stroke-width="0.7" stroke-linejoin="round" />
<polygon points="111.8,298.9 104.1,304.0 122.4,334.5 129.3,326.7" fill="#f5f200" stroke="#f5f200" stroke-width="0.7" stroke-linejoin="round" />
<polygon points="145.8,422.5 119.5,329.7 130.8,331.0 155.9,423.7" fill="#ddd522" stroke="#ddd522" stroke-width="0.7" stroke-linejoin="round" />
<polygon points="226.5,252.8 219.3,255.7 238.7,281.3 246.0,278.2" fill="#f3ef18" stroke="#f3ef18" stroke-width="0.7" stroke-linejoin="round" />
<polygon points="226.1,254.1 235.3,260.3 251.2,280.6 267.0,308.0 246.0,278.2" fill="#e6e01a" stroke="#e6e01a" stroke-width="0.7" stroke-linejoin="round" />
<polygon points="144.0,286.0 137.7,288.5 155.7,315.7 162.1,313.1" fill="#c2ba1a" stroke="#c2ba1a" stroke-width="0.7" stroke-linejoin="round" />
<polygon points="161.6,314.0 157.0,315.9 161.7,335.9 166.2,334.0" fill="#b0a812" stroke="#b0a812" stroke-width="0.7" stroke-linejoin="round" />
<clipPath id="d3"><polygon points="146.0,353.1 145.6,350.7 145.8,348.2 146.6,345.5 147.8,342.8 149.5,340.1 151.7,337.6 154.2,335.2 157.1,333.1 160.1,331.2 163.4,329.8 166.6,328.7 169.9,328.1 173.0,327.8 175.9,328.1 178.6,328.7 180.9,329.8 182.8,331.2 184.3,333.0 185.2,335.1 185.7,337.4 185.7,339.9 185.1,342.5 184.1,345.1 182.6,347.7 180.7,350.2 178.4,352.6 175.8,354.8 173.0,356.7 169.9,358.3 166.8,359.6 163.6,360.4 160.5,360.9 157.5,361.0 154.7,360.6 152.1,359.9 149.9,358.7 148.2,357.2 146.8,355.3 146.0,353.1"/></clipPath>
<polygon points="146.0,353.1 145.6,350.7 145.8,348.2 146.6,345.5 147.8,342.8 149.5,340.1 151.7,337.6 154.2,335.2 157.1,333.1 160.1,331.2 163.4,329.8 166.6,328.7 169.9,328.1 173.0,327.8 175.9,328.1 178.6,328.7 180.9,329.8 182.8,331.2 184.3,333.0 185.2,335.1 185.7,337.4 185.7,339.9 185.1,342.5 184.1,345.1 182.6,347.7 180.7,350.2 178.4,352.6 175.8,354.8 173.0,356.7 169.9,358.3 166.8,359.6 163.6,360.4 160.5,360.9 157.5,361.0 154.7,360.6 152.1,359.9 149.9,358.7 148.2,357.2 146.8,355.3 146.0,353.1" fill="#d2ca10" stroke="#d2ca10" stroke-width="0.7" stroke-linejoin="round" />
<polygon points="143.0,355.6 142.6,353.2 142.8,350.7 143.6,348.0 144.8,345.3 146.5,342.6 148.7,340.1 151.2,337.7 154.1,335.6 157.1,333.7 160.4,332.3 163.6,331.2 166.9,330.6 170.0,330.3 172.9,330.6 175.6,331.2 177.9,332.3 179.8,333.7 181.3,335.5 182.2,337.6 182.7,339.9 182.7,342.4 182.1,345.0 181.1,347.6 179.6,350.2 177.7,352.7 175.4,355.1 172.8,357.3 170.0,359.2 166.9,360.8 163.8,362.1 160.6,362.9 157.5,363.4 154.5,363.5 151.7,363.1 149.1,362.4 146.9,361.2 145.2,359.7 143.8,357.8 143.0,355.6" fill="#f4f000" stroke="#f4f000" stroke-width="0.7" stroke-linejoin="round" clip-path="url(#d3)"/>
<linearGradient id="sk3" gradientUnits="userSpaceOnUse" x1="157.5" y1="349.6" x2="164.5" y2="343.9"><stop offset="0" stop-color="#fffde0" stop-opacity="0"/><stop offset="0.35" stop-color="#fffde0" stop-opacity="0.9"/><stop offset="0.6" stop-color="#fffde0" stop-opacity="1"/><stop offset="1" stop-color="#fffde0" stop-opacity="0"/></linearGradient>
<polygon points="146.2,335.7 153.2,330.0 175.8,357.8 168.8,363.5" fill="url(#sk3)" clip-path="url(#d3)"/>
<linearGradient id="tg" gradientUnits="userSpaceOnUse" x1="212" y1="333" x2="256" y2="327"><stop offset="0" stop-color="#bdb516"/><stop offset="0.12" stop-color="#d9d228"/><stop offset="0.45" stop-color="#d5cd24"/><stop offset="0.58" stop-color="#b9b116"/><stop offset="1" stop-color="#aaa210"/></linearGradient>
<polygon points="208.8,296.0 210.3,289.6 215.7,284.3 224.3,280.4 235.0,278.9 243.5,280.0 248.9,284.3 251.0,292.8 252.1,303.5 254.2,325.0 257.5,352.8 259.6,373.1 262.0,395.0 250.0,410.0 225.0,412.0 223.2,404.2 222.1,395.6 220.0,374.2 215.7,346.4 211.4,320.7" fill="url(#tg)" />
<clipPath id="d4"><polygon points="213.8,318.3 213.6,316.1 214.0,313.8 214.7,311.4 215.9,309.0 217.5,306.6 219.4,304.4 221.6,302.3 224.1,300.5 226.7,298.9 229.5,297.7 232.2,296.8 235.0,296.3 237.6,296.2 240.0,296.4 242.1,297.1 244.0,298.1 245.5,299.4 246.6,301.1 247.3,303.0 247.5,305.1 247.4,307.3 246.8,309.6 245.8,312.0 244.4,314.3 242.7,316.5 240.6,318.6 238.3,320.5 235.9,322.2 233.3,323.6 230.6,324.6 227.9,325.4 225.3,325.7 222.8,325.7 220.5,325.3 218.4,324.6 216.7,323.4 215.3,322.0 214.3,320.3 213.8,318.3"/></clipPath>
<polygon points="213.8,318.3 213.6,316.1 214.0,313.8 214.7,311.4 215.9,309.0 217.5,306.6 219.4,304.4 221.6,302.3 224.1,300.5 226.7,298.9 229.5,297.7 232.2,296.8 235.0,296.3 237.6,296.2 240.0,296.4 242.1,297.1 244.0,298.1 245.5,299.4 246.6,301.1 247.3,303.0 247.5,305.1 247.4,307.3 246.8,309.6 245.8,312.0 244.4,314.3 242.7,316.5 240.6,318.6 238.3,320.5 235.9,322.2 233.3,323.6 230.6,324.6 227.9,325.4 225.3,325.7 222.8,325.7 220.5,325.3 218.4,324.6 216.7,323.4 215.3,322.0 214.3,320.3 213.8,318.3" fill="#d2ca10" stroke="#d2ca10" stroke-width="0.7" stroke-linejoin="round" />
<polygon points="210.8,320.8 210.6,318.6 211.0,316.3 211.7,313.9 212.9,311.5 214.5,309.1 216.4,306.9 218.6,304.8 221.1,303.0 223.7,301.4 226.5,300.2 229.2,299.3 232.0,298.8 234.6,298.7 237.0,298.9 239.1,299.6 241.0,300.6 242.5,301.9 243.6,303.6 244.3,305.5 244.5,307.6 244.4,309.8 243.8,312.1 242.8,314.5 241.4,316.8 239.7,319.0 237.6,321.1 235.3,323.0 232.9,324.7 230.3,326.1 227.6,327.1 224.9,327.9 222.3,328.2 219.8,328.2 217.5,327.8 215.4,327.1 213.7,325.9 212.3,324.5 211.3,322.8 210.8,320.8" fill="#f4f000" stroke="#f4f000" stroke-width="0.7" stroke-linejoin="round" clip-path="url(#d4)"/>
<linearGradient id="sk4" gradientUnits="userSpaceOnUse" x1="224.3" y1="316.0" x2="231.7" y2="311.0"><stop offset="0" stop-color="#fffde0" stop-opacity="0"/><stop offset="0.35" stop-color="#fffde0" stop-opacity="0.9"/><stop offset="0.6" stop-color="#fffde0" stop-opacity="1"/><stop offset="1" stop-color="#fffde0" stop-opacity="0"/></linearGradient>
<polygon points="214.4,301.6 221.8,296.5 241.6,325.4 234.2,330.5" fill="url(#sk4)" clip-path="url(#d4)"/>
<clipPath id="c6a"><polygon points="227.4,411.1 229.5,413.9 232.1,416.3 235.2,418.4 238.6,420.2 242.3,421.6 246.2,422.5 250.4,423.0 254.6,423.1 258.8,422.7 262.9,421.9 266.9,420.6 270.7,418.9 274.2,416.9 277.3,414.5 280.0,411.9 282.3,409.0 284.0,406.0 285.2,402.8 285.9,399.5 286.0,396.3 285.6,393.1 284.6,390.0 283.2,387.1 281.2,384.4 278.8,381.9 275.9,379.8 272.8,378.0 269.3,376.5 265.5,375.4 261.6,374.7 257.6,374.5 253.6,374.6 249.5,375.2 245.6,376.2 241.8,377.5 238.2,379.3 235.0,381.3 232.0,383.7 229.5,386.4 227.4,389.2 225.8,392.3 224.7,395.4 224.1,398.7 224.1,401.9 224.7,405.1 225.7,408.2 227.4,411.1"/><polygon points="208.8,296.0 210.3,289.6 215.7,284.3 224.3,280.4 235.0,278.9 243.5,280.0 248.9,284.3 251.0,292.8 252.1,303.5 254.2,325.0 257.5,352.8 259.6,373.1 262.0,395.0 250.0,410.0 225.0,412.0 223.2,404.2 222.1,395.6 220.0,374.2 215.7,346.4 211.4,320.7"/></clipPath>
<polygon points="229.0,420.7 231.1,423.3 233.7,425.8 236.7,427.9 240.1,429.6 243.7,431.0 247.6,432.0 251.7,432.5 255.9,432.5 260.0,432.1 264.1,431.3 268.1,430.1 271.8,428.4 275.2,426.4 278.3,424.0 281.0,421.4 283.2,418.5 284.9,415.5 286.1,412.3 286.8,409.1 286.9,405.9 286.5,402.7 285.5,399.6 284.1,396.7 282.1,394.0 279.7,391.6 276.9,389.4 273.8,387.6 270.3,386.2 266.6,385.1 262.8,384.4 258.8,384.2 254.8,384.3 250.8,384.9 246.9,385.8 243.2,387.2 239.7,388.9 236.5,391.0 233.6,393.3 231.1,396.0 229.0,398.8 227.4,401.9 226.3,405.0 225.8,408.2 225.8,411.5 226.3,414.7 227.4,417.7 229.0,420.7" fill="#ffffee" stroke="#ffffee" stroke-width="0.7" stroke-linejoin="round" clip-path="url(#c6a)"/>
<clipPath id="c6b"><polygon points="243.3,414.0 244.3,415.2 245.6,416.4 247.0,417.4 248.6,418.2 250.4,418.8 252.2,419.3 254.2,419.5 256.1,419.6 258.1,419.4 260.0,419.0 261.9,418.4 263.7,417.6 265.3,416.7 266.8,415.6 268.1,414.3 269.2,413.0 270.0,411.5 270.6,410.0 270.9,408.5 271.0,406.9 270.8,405.4 270.4,403.9 269.7,402.5 268.8,401.2 267.6,400.0 266.3,399.0 264.8,398.1 263.1,397.4 261.3,396.9 259.5,396.5 257.6,396.4 255.6,396.5 253.7,396.7 251.8,397.2 250.0,397.9 248.3,398.7 246.8,399.7 245.4,400.9 244.2,402.1 243.2,403.5 242.5,405.0 242.0,406.5 241.7,408.0 241.7,409.6 242.0,411.1 242.5,412.6 243.3,414.0"/></clipPath>
<polygon points="243.3,414.0 244.3,415.2 245.6,416.4 247.0,417.4 248.6,418.2 250.4,418.8 252.2,419.3 254.2,419.5 256.1,419.6 258.1,419.4 260.0,419.0 261.9,418.4 263.7,417.6 265.3,416.7 266.8,415.6 268.1,414.3 269.2,413.0 270.0,411.5 270.6,410.0 270.9,408.5 271.0,406.9 270.8,405.4 270.4,403.9 269.7,402.5 268.8,401.2 267.6,400.0 266.3,399.0 264.8,398.1 263.1,397.4 261.3,396.9 259.5,396.5 257.6,396.4 255.6,396.5 253.7,396.7 251.8,397.2 250.0,397.9 248.3,398.7 246.8,399.7 245.4,400.9 244.2,402.1 243.2,403.5 242.5,405.0 242.0,406.5 241.7,408.0 241.7,409.6 242.0,411.1 242.5,412.6 243.3,414.0" fill="#d8d010" stroke="#d8d010" stroke-width="0.7" stroke-linejoin="round" />
<polygon points="245.0,425.3 246.0,426.6 247.3,427.7 248.7,428.7 250.3,429.5 252.0,430.2 253.8,430.6 255.7,430.8 257.6,430.9 259.6,430.7 261.5,430.3 263.3,429.7 265.1,428.9 266.7,428.0 268.1,426.9 269.4,425.6 270.5,424.3 271.3,422.9 271.9,421.4 272.2,419.8 272.3,418.3 272.1,416.8 271.7,415.3 271.0,413.9 270.1,412.6 268.9,411.4 267.6,410.4 266.1,409.5 264.5,408.8 262.7,408.3 260.9,408.0 259.0,407.8 257.1,407.9 255.2,408.2 253.4,408.7 251.6,409.3 249.9,410.1 248.4,411.1 247.0,412.3 245.9,413.6 244.9,414.9 244.2,416.4 243.7,417.9 243.4,419.4 243.4,421.0 243.7,422.5 244.3,423.9 245.0,425.3" fill="#8d929b" stroke="#8d929b" stroke-width="0.7" stroke-linejoin="round" clip-path="url(#c6b)"/>
<line x1="269.9" y1="235.4" x2="104.5" y2="301.9" stroke="#3399ff" stroke-width="2.7" stroke-linecap="round"/>
<line x1="138.9" y1="419.9" x2="256.6" y2="619.8" stroke="#3399ff" stroke-width="2.7" stroke-linecap="round"/>
<line x1="104.5" y1="301.9" x2="237.7" y2="516.5" stroke="#3399ff" stroke-width="2.7" stroke-linecap="round"/>
<line x1="138.9" y1="419.9" x2="104.5" y2="301.9" stroke="#3399ff" stroke-width="2.7" stroke-linecap="round"/>
<line x1="256.6" y1="619.8" x2="413.6" y2="533.4" stroke="#3399ff" stroke-width="2.7" stroke-linecap="round"/>
<line x1="237.7" y1="516.5" x2="423.9" y2="422.3" stroke="#3399ff" stroke-width="2.7" stroke-linecap="round"/>
<line x1="256.6" y1="619.8" x2="237.7" y2="516.5" stroke="#3399ff" stroke-width="2.7" stroke-linecap="round"/>
<line x1="423.9" y1="422.3" x2="269.9" y2="235.4" stroke="#3399ff" stroke-width="2.7" stroke-linecap="round"/>
<line x1="413.6" y1="533.4" x2="423.9" y2="422.3" stroke="#3399ff" stroke-width="2.7" stroke-linecap="round"/>
<g stroke-linecap="round"><line x1="106.5" y1="575" x2="95.5" y2="560" stroke="#1e7d1e" stroke-width="4.5"/><polygon points="90,552 100.5,557.5 93,563" fill="#228b22"/><line x1="111" y1="577" x2="131" y2="567.5" stroke="#d42020" stroke-width="4.5"/><polygon points="139,563.5 129,562 132.5,572" fill="#e02020"/><line x1="108.5" y1="578" x2="108.5" y2="563" stroke="#0000c8" stroke-width="5.5"/><polygon points="108.5,554 103,564 114,564" fill="#0000d0"/></g><text x="104" y="553" font-family="Liberation Sans,sans-serif" font-weight="bold" font-size="10" fill="#0000d0">z</text><text x="143" y="563" font-family="Liberation Sans,sans-serif" font-weight="bold" font-size="11" fill="#d42020" transform="rotate(-20 146 560)">x</text><text x="81" y="549" font-family="Liberation Sans,sans-serif" font-weight="bold" font-size="10" fill="#1e7d1e" transform="rotate(-15 84 546)">y</text><g stroke="#111" stroke-width="1"><line x1="350" y1="378.5" x2="360" y2="376.5"/><line x1="352" y1="373" x2="357.5" y2="383"/><line x1="357.5" y1="373" x2="352" y2="383"/></g>
</svg>

<!-- splitter -->
<svg class="abs" style="left:664px;top:95px" width="4" height="546"><defs><pattern id="dots" width="2" height="2" patternUnits="userSpaceOnUse"><rect width="2" height="2" fill="#fff"/><rect width="1" height="1" fill="#222"/><rect x="1" y="1" width="1" height="1" fill="#222"/></pattern></defs><rect x="0.5" width="3" height="546" fill="url(#dots)"/></svg>

<!-- right tab control -->
<div class="abs" style="left:668px;top:115px;width:439px;height:526px;border:1px solid #b4b4b4;box-sizing:border-box;background:#fff;"></div>
<div class="abs tab sel" style="left:668px;width:107px;"></div><div id="t3" class="abs tt" style="top:98px;">Rozmístění objektů</div>
<div class="abs tab" style="left:776px;width:39px;"></div><div id="t4" class="abs tt">Slicer</div>
<div class="abs tab" style="left:816px;width:74px;"></div><div id="t5" class="abs tt">Print Preview</div>
<div class="abs tab" style="left:891px;width:42px;"></div><div id="t6" class="abs tt">Server</div>
<div class="abs tab" style="left:934px;width:101px;"></div><div id="t7" class="abs tt">Manuální ovládání</div>
<div class="abs tab" style="left:1036px;width:50px;"></div><div id="t8" class="abs tt">SD karta</div>
<div class="abs" style="left:672px;top:118px;width:433px;height:38px;background:linear-gradient(#fdfdfd,#f5f5f5 55%,#ececec 88%,#e9f2f8);"></div>
<svg class="abs" style="left:672px;top:118px" width="433" height="38" viewBox="672 118 433 38">
<path d="M678.2,124.2 H696.2 L702.8,130.8 V148 H678.2Z" fill="#fcfcfc" stroke="#5e5e5e" stroke-width="2" stroke-linejoin="miter"/>
<path d="M682.2,124.2 V133.4 H694.2 V124.2" fill="none" stroke="#5e5e5e" stroke-width="1.8"/><rect x="682.6" y="124.6" width="4.6" height="7.6" fill="#6e6e6e"/>
<path d="M683,148 V139.6 H698.4 V148" fill="none" stroke="#5e5e5e" stroke-width="1.8"/>
<circle cx="726.5" cy="135.8" r="13.7" fill="#686868"/><g fill="#fff"><rect x="719" y="133.3" width="15" height="5"/><rect x="724" y="128.3" width="5" height="15"/></g>
<path d="M749.6,129.4 L755.6,123.4 H765.8 V142.8 H749.6 Z" fill="#f8f8f8" stroke="#5e5e5e" stroke-width="1.8"/><path d="M755.6,123.4 V129.4 H749.6" fill="none" stroke="#5e5e5e" stroke-width="1.6"/>
<path d="M759.8,134.8 L765.8,128.8 H776.0 V148.2 H759.8 Z" fill="#f8f8f8" stroke="#5e5e5e" stroke-width="1.8"/><path d="M765.8,128.8 V134.8 H759.8" fill="none" stroke="#5e5e5e" stroke-width="1.6"/>
<rect x="782.3" y="124.2" width="9" height="6.3" rx="1" fill="#6a6a6a"/>
<rect x="793.6" y="124.2" width="9" height="6.3" rx="1" fill="#6a6a6a"/>
<rect x="804.9" y="124.2" width="9" height="6.3" rx="1" fill="#6a6a6a"/>
<rect x="782.3" y="132.7" width="9" height="6.3" rx="1" fill="#6a6a6a"/>
<rect x="793.6" y="132.7" width="9" height="6.3" rx="1" fill="#6a6a6a"/>
<rect x="804.9" y="132.7" width="9" height="6.3" rx="1" fill="#6a6a6a"/>
<rect x="782.3" y="141.2" width="9" height="6.3" rx="1" fill="#6a6a6a"/>
<rect x="793.6" y="141.2" width="9" height="6.3" rx="1" fill="#6a6a6a"/>
<rect x="804.9" y="141.2" width="9" height="6.3" rx="1" fill="#6a6a6a"/>
<circle cx="834" cy="135.6" r="7.8" fill="none" stroke="#b9b9b9" stroke-width="2.2"/>
<rect x="841.9" y="133.1" width="5" height="5" fill="#b9b9b9"/>
<line x1="839.0" y1="135.6" x2="844.0" y2="135.6" stroke="#b9b9b9" stroke-width="2"/>
<rect x="821.1" y="133.1" width="5" height="5" fill="#b9b9b9"/>
<line x1="829.0" y1="135.6" x2="824.0" y2="135.6" stroke="#b9b9b9" stroke-width="2"/>
<rect x="831.5" y="143.5" width="5" height="5" fill="#b9b9b9"/>
<line x1="834.0" y1="140.6" x2="834.0" y2="145.6" stroke="#b9b9b9" stroke-width="2"/>
<rect x="831.5" y="122.7" width="5" height="5" fill="#b9b9b9"/>
<line x1="834.0" y1="130.6" x2="834.0" y2="125.6" stroke="#b9b9b9" stroke-width="2"/>
<polygon points="867,124 877,148.4 856.6,148.4" fill="#cfcfcf"/><polygon points="867,124 867,148.4 856.6,148.4" fill="#c6c6c6"/>
<polygon points="907,124 917,148.4 896,148.4" fill="#cbcbcb"/>
<ellipse cx="906.5" cy="136.4" rx="12" ry="5" fill="none" stroke="#9b9b9b" stroke-width="2.6" stroke-dasharray="52 9" stroke-dashoffset="-20"/>
<polygon points="907,124 912.4,137 901.5,137" fill="#c4c4c4"/>
<polygon points="900,138.8 905.5,141 901.6,145" fill="#9b9b9b"/>
<polygon points="934.6,134.4 948.8,134.4 956.8,148.6 927.4,148.6" fill="#5f9cb8"/>
<ellipse cx="941.7" cy="134.4" rx="7.1" ry="2.3" fill="#2fe02f" stroke="#1fae1f" stroke-width="0.8"/>
<polygon points="975.4,125 975.4,148.4 962.6,148.4" fill="#c9c9c9"/><polygon points="980.8,125 980.8,148.4 993.8,148.4" fill="#c9c9c9"/>
<line x1="978.2" y1="122.4" x2="978.2" y2="149.4" stroke="#333" stroke-width="1.6" stroke-dasharray="3.2 2"/>
<polygon points="973,139.6 984,143.2 973,146.8 975.6,143.2" fill="#9a9a9a"/>
</svg>
<div class="abs hdr" style="top:156px;"></div><div id="h1" class="abs ht" style="top:161px;">Object Group 2</div>
<div class="abs row" style="top:181px;"></div>
<div class="abs hdr" style="top:207px;"></div><div id="h2" class="abs ht" style="top:212px;">Object Group 1</div>
<div class="abs row" style="top:232px;"></div>
<div id="r1" class="abs ms" style="left:721px;top:188px;">Drzak_tyce_Z_pravy-1ks</div>
<div id="r2" class="abs ms" style="left:721px;top:239px;">Drzak_tyce_Z_levy-1ks</div>
<div class="abs combo" style="top:184px;"></div>
<div class="abs combo" style="top:235px;"></div>
<div class="abs hl" style="left:942px;top:186px;width:47px;height:16px;"></div>
<div class="abs hl" style="left:941px;top:237px;width:48px;height:16px;"></div>
<div id="c1" class="abs ms" style="left:935px;top:188px;">1:1. tryska</div>
<div id="c2" class="abs ms" style="left:935px;top:239px;">2:2. tryska</div>
<svg class="abs" style="left:672px;top:181px" width="433" height="77" viewBox="672 181 433 77">
<path d="M694,193.7 Q700.8,185.1 707.6,193.7 Q700.8,201.9 694,193.7 Z" fill="#fbfbf0" stroke="#6f6a62" stroke-width="1.5" stroke-linejoin="round"/><circle cx="700.8" cy="193.3" r="3.3" fill="#757575"/>
<polyline points="1011.6,193.1 1014.7,196.7 1017.8,193.1" fill="none" stroke="#333" stroke-width="1.5"/>
<path d="M1051.68,192.91 L1053.55,192.95 L1053.55,195.65 L1051.68,195.69 L1051.41,196.34 L1052.71,197.70 L1050.80,199.61 L1049.44,198.31 L1048.79,198.58 L1048.75,200.45 L1046.05,200.45 L1046.01,198.58 L1045.36,198.31 L1044.00,199.61 L1042.09,197.70 L1043.39,196.34 L1043.12,195.69 L1041.25,195.65 L1041.25,192.95 L1043.12,192.91 L1043.39,192.26 L1042.09,190.90 L1044.00,188.99 L1045.36,190.29 L1046.01,190.02 L1046.05,188.15 L1048.75,188.15 L1048.79,190.02 L1049.44,190.29 L1050.80,188.99 L1052.71,190.90 L1051.41,192.26Z M1045.20,194.30 a2.20,2.20 0 1,0 4.40,0 a2.20,2.20 0 1,0 -4.40,0Z" fill="#6e6a60" fill-rule="evenodd"/>
<rect x="1081.3" y="190.5" width="9.6" height="1.5" fill="#777066"/><rect x="1084.3" y="188.9" width="3.6" height="1.9" fill="#777066"/><path d="M1082.0,192.7 H1090.2 L1089.6,200.1 H1082.6 Z" fill="#777066"/><rect x="1084.02" y="193.7" width="0.90" height="5.0" fill="#fdfde6" opacity="0.75"/><rect x="1085.65" y="193.7" width="0.90" height="5.0" fill="#fdfde6" opacity="0.75"/><rect x="1087.28" y="193.7" width="0.90" height="5.0" fill="#fdfde6" opacity="0.75"/>
<path d="M694,244.7 Q700.8,236.1 707.6,244.7 Q700.8,252.9 694,244.7 Z" fill="#fbfbf0" stroke="#6f6a62" stroke-width="1.5" stroke-linejoin="round"/><circle cx="700.8" cy="244.3" r="3.3" fill="#757575"/>
<polyline points="1011.6,244.1 1014.7,247.7 1017.8,244.1" fill="none" stroke="#333" stroke-width="1.5"/>
<path d="M1051.68,243.91 L1053.55,243.95 L1053.55,246.65 L1051.68,246.69 L1051.41,247.34 L1052.71,248.70 L1050.80,250.61 L1049.44,249.31 L1048.79,249.58 L1048.75,251.45 L1046.05,251.45 L1046.01,249.58 L1045.36,249.31 L1044.00,250.61 L1042.09,248.70 L1043.39,247.34 L1043.12,246.69 L1041.25,246.65 L1041.25,243.95 L1043.12,243.91 L1043.39,243.26 L1042.09,241.90 L1044.00,239.99 L1045.36,241.29 L1046.01,241.02 L1046.05,239.15 L1048.75,239.15 L1048.79,241.02 L1049.44,241.29 L1050.80,239.99 L1052.71,241.90 L1051.41,243.26Z M1045.20,245.30 a2.20,2.20 0 1,0 4.40,0 a2.20,2.20 0 1,0 -4.40,0Z" fill="#6e6a60" fill-rule="evenodd"/>
<rect x="1081.3" y="241.5" width="9.6" height="1.5" fill="#777066"/><rect x="1084.3" y="239.9" width="3.6" height="1.9" fill="#777066"/><path d="M1082.0,243.7 H1090.2 L1089.6,251.1 H1082.6 Z" fill="#777066"/><rect x="1084.02" y="244.7" width="0.90" height="5.0" fill="#fdfde6" opacity="0.75"/><rect x="1085.65" y="244.7" width="0.90" height="5.0" fill="#fdfde6" opacity="0.75"/><rect x="1087.28" y="244.7" width="0.90" height="5.0" fill="#fdfde6" opacity="0.75"/>
</svg>

<!-- log panel -->
<div class="abs" style="left:8px;top:647px;width:1102px;height:70px;border:1px solid #6e6e6e;box-sizing:border-box;background:#f0f0f0;"></div>
<div id="l0" class="abs ms" style="left:15px;top:654px;">Zobrazit v logu:</div>
<svg class="abs" style="left:9px;top:648px" width="1100" height="24" viewBox="9 648 1100 24">
<defs><radialGradient id="rd" cx="0.4" cy="0.35" r="0.7"><stop offset="0" stop-color="#5f86d0"/><stop offset="0.55" stop-color="#34509c"/><stop offset="1" stop-color="#101c4c"/></radialGradient><radialGradient id="rl" cx="0.45" cy="0.4" r="0.7"><stop offset="0" stop-color="#b4f2ff"/><stop offset="0.6" stop-color="#94dcff"/><stop offset="1" stop-color="#74b8ee"/></radialGradient></defs>
<circle cx="108.8" cy="661" r="5.2" fill="url(#rd)" stroke="#05081c" stroke-width="1.2"/>
<circle cx="180.5" cy="661" r="5.1" fill="url(#rl)" stroke="#1d3566" stroke-width="1.4"/>
<circle cx="262.5" cy="661" r="5.1" fill="url(#rl)" stroke="#1d3566" stroke-width="1.4"/>
<circle cx="341.8" cy="661" r="5.1" fill="url(#rl)" stroke="#1d3566" stroke-width="1.4"/>
<circle cx="405.5" cy="661" r="5.2" fill="url(#rd)" stroke="#05081c" stroke-width="1.2"/>
<circle cx="461.3" cy="661" r="5.1" fill="url(#rl)" stroke="#1d3566" stroke-width="1.4"/>
<rect x="584.4" y="657.2" width="9.1" height="1.4" fill="#747474"/><rect x="587.2" y="655.7" width="3.4" height="1.8" fill="#747474"/><path d="M585.1,659.3 H592.9 L592.3,666.3 H585.6 Z" fill="#747474"/><rect x="586.98" y="660.2" width="0.85" height="4.7" fill="#fdfde6" opacity="0.75"/><rect x="588.53" y="660.2" width="0.85" height="4.7" fill="#fdfde6" opacity="0.75"/><rect x="590.08" y="660.2" width="0.85" height="4.7" fill="#fdfde6" opacity="0.75"/>
<g fill="#f4f4f4" stroke="#666" stroke-width="1.1"><path d="M675.6,658.6 L679.2,655 H684.6 V664.4 H675.6Z"/><path d="M679.2,655 V658.6 H675.6" fill="none"/><path d="M680,661 L683.4,657.6 H688.4 V667 H680Z"/><path d="M683.4,657.6 V661 H680" fill="none"/></g>
</svg>
<div id="l1" class="abs ms" style="left:117.5px;top:654px;">Příkazy</div>
<div id="l2" class="abs ms" style="left:189.3px;top:654px;">Informace</div>
<div id="l3" class="abs ms" style="left:271.0px;top:654px;">Varování</div>
<div id="l4" class="abs ms" style="left:350.0px;top:654px;">Chyby</div>
<div id="l5" class="abs ms" style="left:415.0px;top:654px;">ACK</div>
<div id="l6" class="abs ms" style="left:470.5px;top:654px;">Automatický posun</div>
<div id="l7" class="abs ms" style="left:598.8px;top:654px;">Vyčistit Log</div>
<div id="l8" class="abs ms" style="left:692.0px;top:654px;">Kopírovat</div>
<div class="abs" style="left:10px;top:673px;width:1084px;height:16px;background:#fff;"></div>
<div class="abs" style="left:10px;top:689px;width:1084px;height:16px;background:#faf0e6;"></div>
<div class="abs" style="left:9px;top:673px;width:102px;height:43px;background:#4f999f;"></div>
<div id="g1" class="abs log" style="left:15px;top:673.5px;color:#fff;">13:42:05.123
13:42:05.123</div>
<div id="g2" class="abs log" style="left:117.5px;top:673.5px;color:#000080;">Objekt je manifold.
Analýza dokončena.</div>
<div class="abs" style="left:1094px;top:673px;width:15px;height:43px;background:#fff;"></div>
<svg class="abs" style="left:1094px;top:673px" width="15" height="43"><g fill="none" stroke="#585858" stroke-width="1.5"><polyline points="4.2,11.6 7.5,8.4 10.8,11.6"/><polyline points="4.2,31.4 7.5,34.6 10.8,31.4"/></g></svg>

<!-- status bar -->
<div id="s1" class="abs t st" style="left:13px;">Odpojeno: REBEL III SERVER</div>
<div id="s2" class="abs t st" style="left:481px;">-</div>
<div id="s3" class="abs t st" style="left:818px;">Nečinnost.</div>
<div class="abs" style="left:880px;top:720px;width:212px;height:14px;border:1px solid #bcbcbc;background:#e6e6e6;box-sizing:content-box;"></div>
<svg class="abs" style="left:1097px;top:727px" width="12" height="12"><g fill="#b0b0b0"><rect x="8" y="0" width="2" height="2"/><rect x="4" y="4" width="2" height="2"/><rect x="8" y="4" width="2" height="2"/><rect x="0" y="8" width="2" height="2"/><rect x="4" y="8" width="2" height="2"/><rect x="8" y="8" width="2" height="2"/></g></svg>
</body>
</html>
